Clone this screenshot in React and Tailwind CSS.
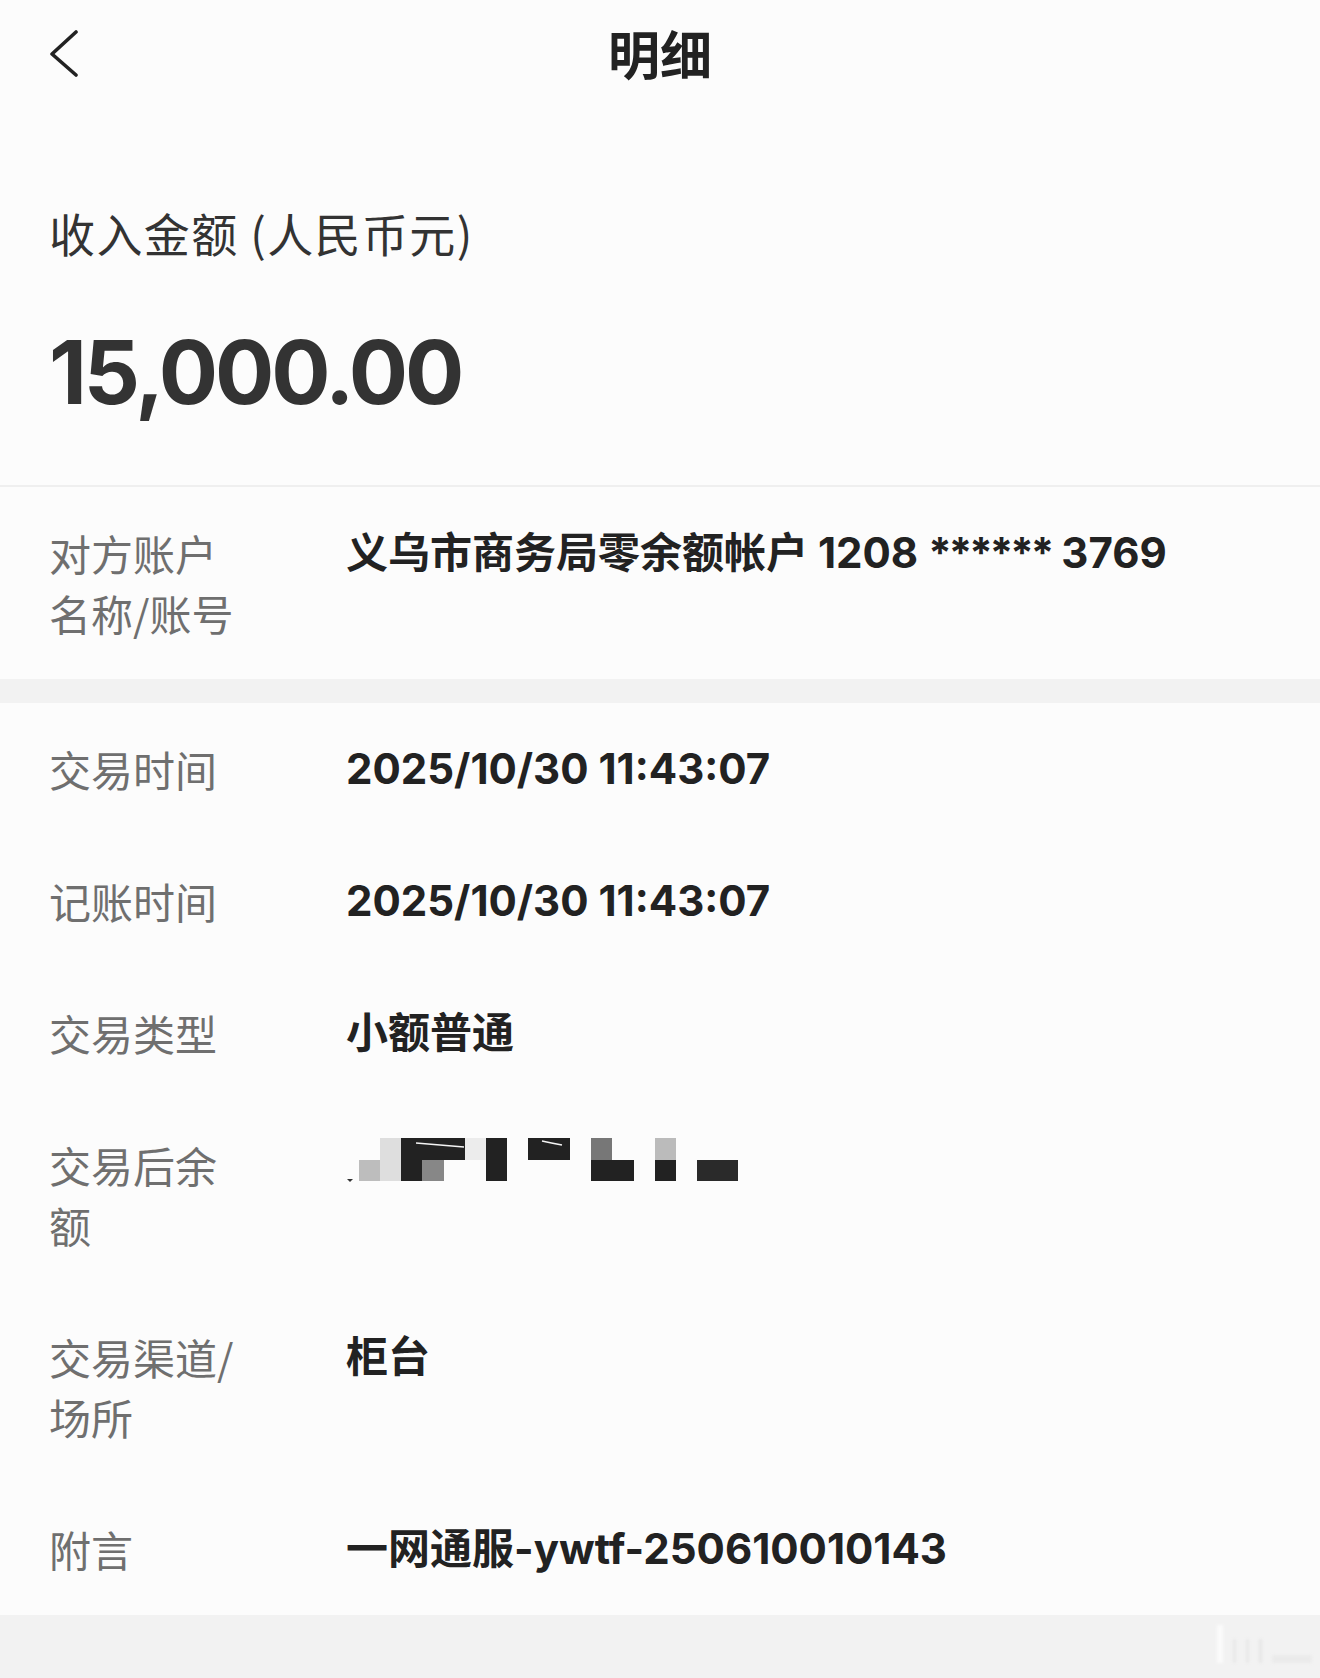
import React from "react";

const latin = { fontFamily: 'Inter, "Noto Sans CJK SC", sans-serif' };
const cjk = { fontFamily: '"Noto Sans CJK SC", Inter, sans-serif' };

function BackChevron() {
  return (
    <svg width="30" height="48" viewBox="0 0 30 48" fill="none">
      <polyline
        points="27,3 3,25 27,46"
        stroke="#222"
        strokeWidth="3.6"
        strokeLinecap="round"
        strokeLinejoin="round"
      />
    </svg>
  );
}

// Pixelated mosaic hiding the balance value
function Mosaic() {
  const blocks = [
    [13, 25, 21, 21, "#bdbdbd"],
    [34, 3, 21, 43, "#dedede"],
    [55, 3, 64, 22, "#222"],
    [55, 25, 21, 21, "#222"],
    [76, 25, 22, 21, "#878787"],
    [119, 3, 21, 22, "#ececec"],
    [140, 3, 21, 43, "#222"],
    [182, 3, 42, 22, "#222"],
    [245, 3, 21, 22, "#777"],
    [245, 25, 43, 21, "#222"],
    [309, 3, 21, 22, "#bbbbbb"],
    [309, 25, 21, 21, "#222"],
    [351, 25, 41, 21, "#2a2a2a"],
  ];
  return (
    <svg width="400" height="60" viewBox="0 0 400 60">
      {blocks.map(([x, y, w, h, c], i) => (
        <rect key={i} x={x} y={y} width={w} height={h} fill={c} />
      ))}
      <path d="M1 44 L7 44 L4 47 Z" fill="#333" />
      <path d="M70 8 Q95 10 118 12" stroke="#f5f5f5" strokeWidth="1.5" fill="none" />
      <path d="M196 6 Q205 8 216 10" stroke="#f5f5f5" strokeWidth="1.5" fill="none" />
    </svg>
  );
}

function Row({ label, children }) {
  return (
    <div className="flex py-[36px] pl-[49px] pr-[40px]">
      <div
        className="w-[200px] shrink-0 mr-[97px] text-[42px] leading-[60px] text-[#6f6f6f]"
        style={cjk}
      >
        {label}
      </div>
      <div
        className="flex-1 text-[42px] leading-[60px] font-bold text-[#222]"
        style={latin}
      >
        {children}
      </div>
    </div>
  );
}

export default function App() {
  return (
    <div className="w-[1320px] min-h-[1678px] bg-[#f2f2f2] flex flex-col">
      <div className="bg-[#fcfcfc]">
        {/* Navigation bar */}
        <div className="h-[106px] grid grid-cols-[1fr_auto_1fr] items-center">
          <div className="pl-[49px] flex items-center">
            <BackChevron />
          </div>
          <div className="text-[52px] font-bold text-[#222] leading-none" style={cjk}>
            明细
          </div>
          <div />
        </div>

        {/* Amount */}
        <div className="pt-[94px] pb-[58px] pl-[49px]">
          <div
            className="text-[46px] leading-[64px] text-[#333] tracking-[0.03em]"
            style={cjk}
          >
            收入金额 (人民币元)
          </div>
          <div
            className="mt-[53px] text-[88px] leading-[110px] font-bold text-[#333] tracking-[-0.035em]"
            style={latin}
          >
            15,000.00
          </div>
        </div>
        <div className="h-[2px] bg-[#efefef]" />

        <Row label="对方账户名称/账号">
          义乌市商务局零余额帐户 1208 <span className="tracking-[-0.07em]">******</span> 3769
        </Row>
      </div>

      <div className="h-[24px] bg-[#f2f2f2]" />

      <div className="bg-[#fcfcfc]">
        <Row label="交易时间">2025/10/30 11:43:07</Row>
        <Row label="记账时间">2025/10/30 11:43:07</Row>
        <Row label="交易类型">小额普通</Row>
        <Row label="交易后余额">
          <div className="h-[60px]">
            <Mosaic />
          </div>
        </Row>
        <Row label="交易渠道/场所">柜台</Row>
        <Row label="附言">一网通服-ywtf-250610010143</Row>
      </div>

      <div className="flex-1 bg-[#f2f2f2] relative">
        <div className="absolute right-[8px] top-[10px] flex items-end gap-[10px] opacity-70 blur-[1.5px]">
          <div className="w-[6px] h-[38px] bg-white" />
          <div className="w-[3px] h-[24px] bg-[#e4e4e4]" />
          <div className="w-[3px] h-[24px] bg-[#e4e4e4]" />
          <div className="w-[3px] h-[24px] bg-[#e0e0e0]" />
          <div className="w-[40px] h-[8px] bg-[#e8e8e8]" />
        </div>
      </div>
    </div>
  );
}
